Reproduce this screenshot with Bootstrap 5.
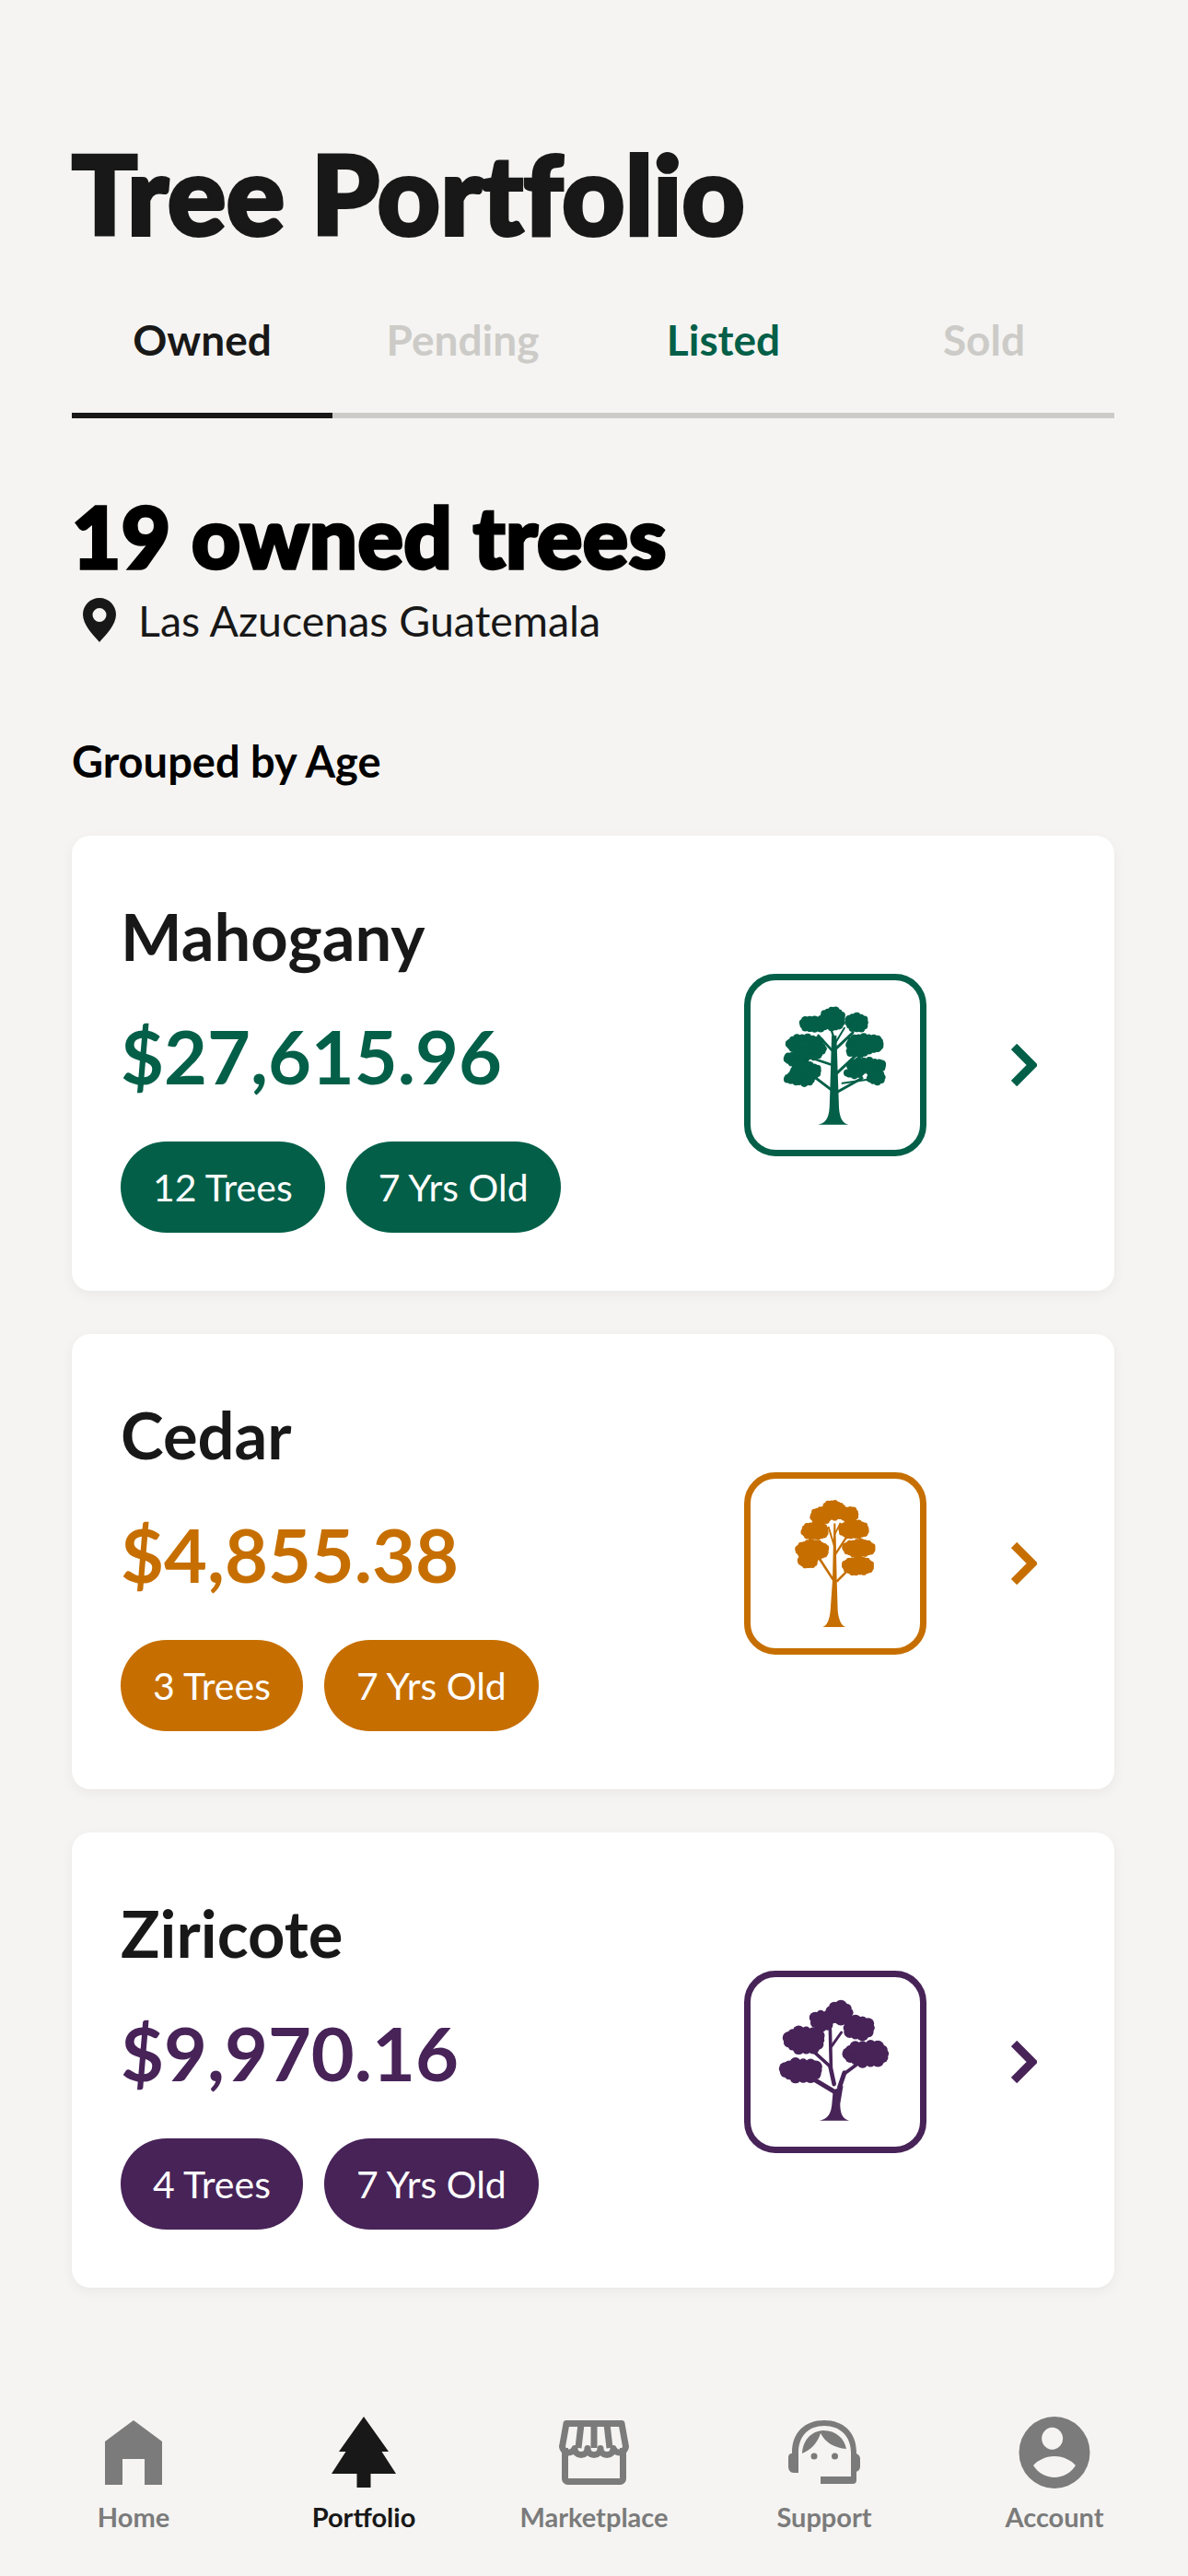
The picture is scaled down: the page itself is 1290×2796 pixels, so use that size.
<!DOCTYPE html>
<html lang="en">
<head>
    <meta charset="UTF-8">
    <meta name="viewport" content="width=device-width, initial-scale=1.0">
    <title>Tree Portfolio</title>
    <link rel="stylesheet" href="https://cdn.jsdelivr.net/npm/bootstrap@5.3.3/dist/css/bootstrap.min.css">
    <style>
        body {
            background: #f5f4f2;
            color: #181818;
            font-family: "Lato", "Liberation Sans", sans-serif;
        }
        .page-main { padding: 145px 80px 0 78px; }
        .page-title {
            font-size: 118px;
            font-weight: 900;
            line-height: 130px;
            letter-spacing: .5px;
            -webkit-text-stroke: 4px #181818;
            margin: 0 0 66px;
        }
        .tab-row { border-bottom: 6px solid #cccbc8; }
        .tab-row .nav-link {
            font-size: 46px;
            font-weight: 700;
            line-height: 56px;
            color: #cccbc8;
            padding: 0 0 51px;
            margin-bottom: -6px;
            border-bottom: 6px solid transparent;
        }
        .tab-row .nav-link.active { color: #181818; border-bottom-color: #181818; }
        .tab-row .nav-link.tab-listed { color: #035f48; }
        .owned-title {
            font-size: 92px;
            font-weight: 900;
            line-height: 100px;
            letter-spacing: .5px;
            -webkit-text-stroke: 3.500px #000;
            color: #000;
            margin: 78px 0 0;
        }
        .place-line { font-size: 46.500px; line-height: 60px; margin-top: 11px; }
        .place-line svg { width: 36px; height: 48px; margin: 0 24px 0 12px; }
        .group-label {
            font-size: 47px;
            font-weight: 700;
            line-height: 56px;
            color: #000;
            margin: 95px 0 53px;
        }
        .tree-card {
            height: 494px;
            margin-bottom: 47px;
            padding: 4px 84px 0 53px;
            background: #fff;
            border: 0;
            border-radius: 20px;
            box-shadow: 0 4px 14px rgba(0, 0, 0, .05);
        }
        .tree-name { font-size: 70.500px; font-weight: 700; line-height: 84px; margin: 0 0 38px; }
        .tree-price { font-size: 81px; font-weight: 700; line-height: 100px; margin: 0 0 43px; }
        .tree-chips { gap: 23px; }
        .tree-chip {
            font-size: 41px;
            line-height: 99px;
            height: 99px;
            padding: 0 35px;
            color: #fff;
            border-radius: 50px;
        }
        .tree-box {
            width: 198px;
            height: 198px;
            border: 7px solid;
            border-radius: 34px;
            margin-right: 92px;
        }
        .tree-box svg { display: block; width: 184px; height: 184px; }
        .chev { width: 28px; height: 46px; }
        .tone-green { color: #035f48; }
        .tone-orange { color: #c66f00; }
        .tone-purple { color: #472358; }
        .chip-green { background: #035f48; }
        .chip-orange { background: #c66f00; }
        .chip-purple { background: #472358; }
        .bottom-bar { padding: 0 20px 46px; }
        .bar-item {
            width: 250px;
            color: #7b7b7b;
            font-size: 29px;
            font-weight: 700;
            line-height: 36px;
            text-decoration: none;
        }
        .bar-item svg { display: block; width: 90px; height: 78px; margin: 0 auto 13px; }
        .bar-item.active { color: #181818; }
    </style>
</head>
<body class="d-flex flex-column min-vh-100">
    <main class="page-main">
        <h1 class="page-title">Tree Portfolio</h1>

        <ul class="nav nav-justified tab-row">
            <li class="nav-item"><a class="nav-link active" href="#">Owned</a></li>
            <li class="nav-item"><a class="nav-link" href="#">Pending</a></li>
            <li class="nav-item"><a class="nav-link tab-listed" href="#">Listed</a></li>
            <li class="nav-item"><a class="nav-link" href="#">Sold</a></li>
        </ul>

        <h2 class="owned-title">19 owned trees</h2>
        <div class="place-line d-flex align-items-center">
            <svg viewBox="0 0 36 48" fill="#181818"><path fill-rule="evenodd" d="M18 0C8 0 0 8 0 18c0 11 11 22 18 30 7-8 18-19 18-30C36 8 28 0 18 0zm0 11a7.500 7.500 0 1 1 0 15 7.500 7.500 0 0 1 0-15z"/></svg>
            <span>Las Azucenas Guatemala</span>
        </div>

        <h3 class="group-label">Grouped by Age</h3>

        <div class="card tree-card flex-row align-items-center justify-content-between">
            <div>
                <h4 class="tree-name">Mahogany</h4>
                <div class="tree-price tone-green">$27,615.96</div>
                <div class="d-flex tree-chips">
                    <span class="tree-chip chip-green">12 Trees</span>
                    <span class="tree-chip chip-green">7 Yrs Old</span>
                </div>
            </div>
            <div class="d-flex align-items-center tone-green">
                <div class="tree-box"><svg id="tree-mahogany" viewBox="73 63 558 558" fill="currentColor"></svg></div>
                <svg class="chev" viewBox="0 0 28 46" fill="none" stroke="currentColor" stroke-width="9"><path d="M3 3l20 20L3 43"/></svg>
            </div>
        </div>

        <div class="card tree-card flex-row align-items-center justify-content-between">
            <div>
                <h4 class="tree-name">Cedar</h4>
                <div class="tree-price tone-orange">$4,855.38</div>
                <div class="d-flex tree-chips">
                    <span class="tree-chip chip-orange">3 Trees</span>
                    <span class="tree-chip chip-orange">7 Yrs Old</span>
                </div>
            </div>
            <div class="d-flex align-items-center tone-orange">
                <div class="tree-box"><svg id="tree-cedar" viewBox="73 68 558 558" fill="currentColor"></svg></div>
                <svg class="chev" viewBox="0 0 28 46" fill="none" stroke="currentColor" stroke-width="9"><path d="M3 3l20 20L3 43"/></svg>
            </div>
        </div>

        <div class="card tree-card flex-row align-items-center justify-content-between">
            <div>
                <h4 class="tree-name">Ziricote</h4>
                <div class="tree-price tone-purple">$9,970.16</div>
                <div class="d-flex tree-chips">
                    <span class="tree-chip chip-purple">4 Trees</span>
                    <span class="tree-chip chip-purple">7 Yrs Old</span>
                </div>
            </div>
            <div class="d-flex align-items-center tone-purple">
                <div class="tree-box"><svg id="tree-ziricote" viewBox="73 73 558 558" fill="currentColor"></svg></div>
                <svg class="chev" viewBox="0 0 28 46" fill="none" stroke="currentColor" stroke-width="9"><path d="M3 3l20 20L3 43"/></svg>
            </div>
        </div>
    </main>

    <nav class="bottom-bar d-flex mt-auto">
        <a class="bar-item text-center" href="#">
            <svg viewBox="0 0 90 78" fill="currentColor"><path d="M45 4L14 27v47h19V46h24v28h19V27z"/></svg>
            Home
        </a>
        <a class="bar-item text-center active" href="#">
            <svg viewBox="0 0 90 78" fill="currentColor"><path d="M45 0L18 38h7.500L10 62h27.500v15h15V62H80L64.500 38H72z"/></svg>
            Portfolio
        </a>
        <a class="bar-item text-center" href="#">
            <svg viewBox="0 0 90 78"><g fill="none" stroke="currentColor" stroke-width="7" stroke-linejoin="round"><path d="M13.500 34v33.500a3 3 0 0 0 3 3h57a3 3 0 0 0 3-3V34"/><path d="M15 7.500h60l4.500 25a7 7 0 0 1-13.500 2 7 7 0 0 1-14 0 7 7 0 0 1-14 0 7 7 0 0 1-14 0 7 7 0 0 1-13.500-2z"/><path d="M31 8l-3 26M45 8v26M59 8l3 26"/></g></svg>
            Marketplace
        </a>
        <a class="bar-item text-center" href="#">
            <svg viewBox="0 0 90 78" fill="currentColor">
                <path d="M10 40V39C10 17 24 4 45 4s35 13 35 35v30a4 4 0 0 1-4 4H41v-8h33V39C74 21 62 10 45 10S17 21 17 39v22h-5c-4 0-6-3-6-7V45c0-3 1-5 4-5z"/>
                <path d="M78 40c4 0 6 3 6 6v8c0 3-2 6-6 6z"/>
                <path d="M21 40C22 26 30 16 44 15C58 15 67 24 69 35C56 34 46 28 41 18C38 28 31 36 21 40z"/>
                <circle cx="34" cy="43" r="3.500"/><circle cx="56.500" cy="43" r="3.500"/>
            </svg>
            Support
        </a>
        <a class="bar-item text-center" href="#">
            <svg viewBox="0 0 90 78" fill="currentColor"><path fill-rule="evenodd" d="M45 0a38.500 39 0 1 1 0 78 38.500 39 0 0 1 0-78zm0 12a11.500 12 0 1 0 0 23.500 11.500 12 0 0 0 0-23.500zM45 43c-10 0-19 5-23 10 5 8 14 13 23 13s18-5 23-13c-4-5-13-10-23-10z"/></svg>
            Account
        </a>
    </nav>

    <script src="https://cdn.jsdelivr.net/npm/bootstrap@5.3.3/dist/js/bootstrap.bundle.min.js"></script>
    <script>
// Each crown is [cx, cy, rx, ry]: an ellipse with uneven circles round the edge for the leafy outline.
// leaf is the base circle radius, branches are [x1, y1, x2, y2, width]
const treeData = {
    'tree-mahogany': {
        leaf: 9,
        crowns: [[343,190,36,32],[300,207,24,16],[272,207,32,18],[423,202,32,24],[252,272,58,24],[290,288,28,14],[225,322,36,16],[262,305,44,12],
                 [450,272,58,26],[425,296,32,12],[255,362,46,22],[218,385,28,12],[250,392,28,10],[455,345,60,20],[415,368,26,8],[487,382,24,16]],
        trunk: 'M295 538C318 534 331 520 333 480L335 420L340 245L356 245L362 420L364 480C366 520 378 534 395 538Z',
        branches: [[345,428,275,375,9],[352,345,270,318,8],[347,300,296,245,8],[352,290,410,235,9],
                   [358,368,425,305,9],[360,430,440,385,9],[375,402,490,385,6],[350,260,335,215,7],[352,270,382,220,6]]
    },
    'tree-cedar': {
        leaf: 7,
        crowns: [[345,172,36,28],[305,190,30,24],[395,185,30,20],[285,240,42,24],[413,235,48,26],
                 [276,303,52,30],[262,340,28,16],[430,296,52,24],[427,355,50,26]],
        trunk: 'M310 556C325 552 334 530 336 500L343 400L347 215L353 215L357 400L360 500C362 530 372 552 386 556Z',
        branches: [[348,405,296,325,8],[358,405,395,368,8],[350,320,388,262,7],[349,290,330,228,6],[351,250,368,215,5]]
    },
    'tree-ziricote': {
        leaf: 14,
        crowns: [[365,190,36,24],[310,215,30,22],[430,240,42,26],[250,280,58,34],
                 [455,325,66,32],[240,380,60,28]],
        trunk: 'M300 545C325 541 338 525 341 490L345 445L378 430L368 490C368 525 378 541 398 545Z',
        branches: [[352,452,262,398,15],[366,435,382,388,15],[380,392,430,355,11],[348,425,335,365,14],[336,368,272,310,11],[338,370,335,245,11],[340,300,372,255,9]]
    }
};

function addShape(svg, name, attrs) {
    const el = document.createElementNS('http://www.w3.org/2000/svg', name);
    Object.keys(attrs).forEach(key => el.setAttribute(key, attrs[key]));
    svg.appendChild(el);
}

Object.keys(treeData).forEach(id => {
    const svg = document.getElementById(id);
    const tree = treeData[id];
    addShape(svg, 'path', { d: tree.trunk });
    tree.branches.forEach(b => {
        addShape(svg, 'line', { x1: b[0], y1: b[1], x2: b[2], y2: b[3], stroke: 'currentColor', 'stroke-width': b[4], 'stroke-linecap': 'round' });
    });
    tree.crowns.forEach(c => {
        addShape(svg, 'ellipse', { cx: c[0], cy: c[1], rx: c[2], ry: c[3] });
        const bumps = Math.max(6, Math.round((c[2] + c[3]) * 3 / (tree.leaf * 1.5)));
        for (let i = 0; i < bumps; i++) {
            const a = i / bumps * Math.PI * 2;
            addShape(svg, 'circle', { cx: c[0] + Math.cos(a) * c[2] * .9, cy: c[1] + Math.sin(a) * c[3] * .9, r: tree.leaf * (1 + (i * 7 % 5) / 8) });
        }
    });
});
    </script>
</body>
</html>
